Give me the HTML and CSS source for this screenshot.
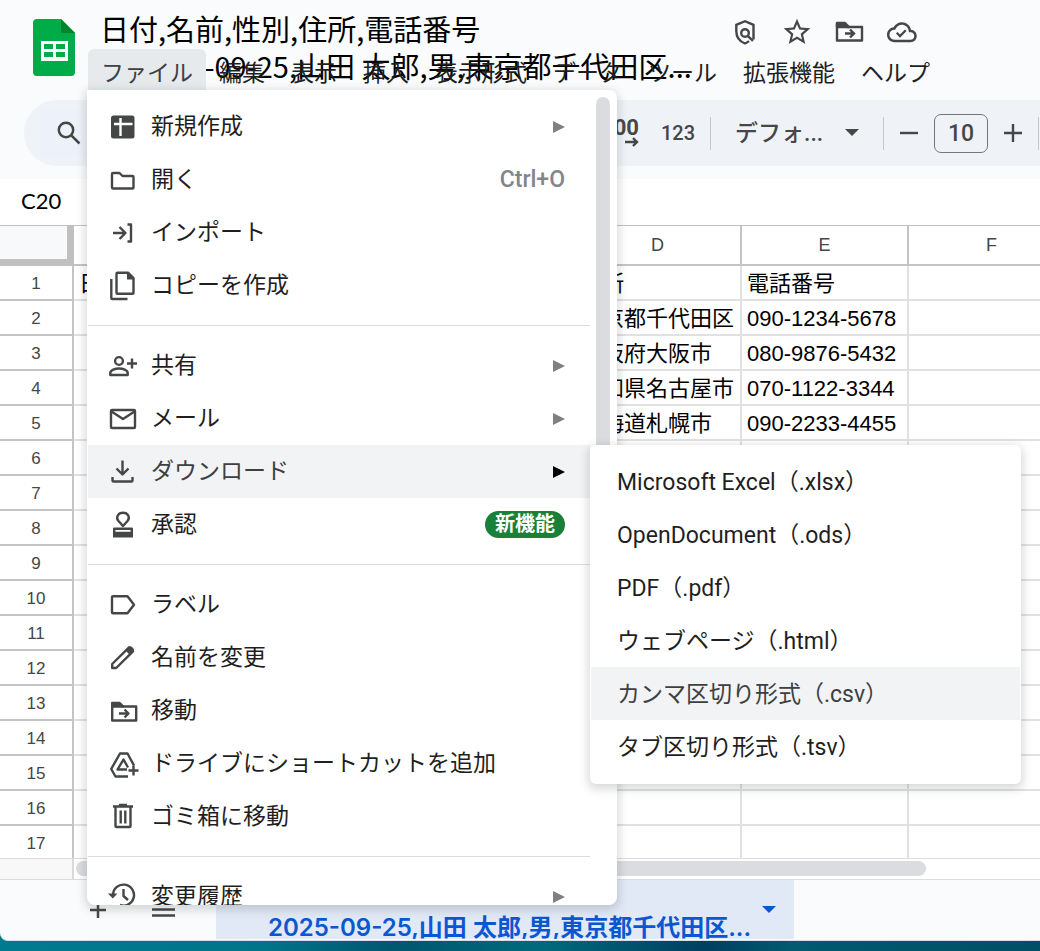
FILE: index.html
```html
<!DOCTYPE html>
<html lang="ja">
<head>
    <meta charset="UTF-8">
    <meta name="viewport" content="width=device-width, initial-scale=1.0">
    <title>日付,名前,性別,住所,電話番号</title>
    <link rel="stylesheet" href="styles.css">
</head>
<body>
    <div class="window">
        <header class="header">
            <svg class="logo" viewBox="0 0 42 57">
                <path fill="#00ac47" d="M4 0h24l14 14v39a4 4 0 0 1-4 4H4a4 4 0 0 1-4-4V4a4 4 0 0 1 4-4z"/>
                <path fill="#00832d" d="M28 0l14 14H28z"/>
                <path fill="#fff" fill-rule="evenodd" d="M8 22h27v20H8zM11 25v5h9v-5zM23 25v5h9v-5zM11 33v5h9v-5zM23 33v5h9v-5z"/>
            </svg>
            <div class="header-main">
                <div class="title-row">
                    <h1 class="title">日付,名前,性別,住所,電話番号<span class="title-next">2025-09-25,山田 太郎,男,東京都千代田区...</span></h1>
                    <div class="title-icons">
                        <button class="icon-button" aria-label="プライバシー">
                            <svg viewBox="0 0 32 32" fill="none" stroke="#444746" stroke-width="2.4">
                                <path d="M24.5 23.5V8.8L16 5.2 7.3 8.8V15c0 6 3.6 10.6 8.7 12.5 1.5-.6 2.8-1.3 4-2.3"/>
                                <circle cx="16" cy="17" r="3.8"/>
                                <path d="M18.6 19.8l5.4 5"/>
                            </svg>
                        </button>
                        <button class="icon-button" aria-label="スター">
                            <svg viewBox="0 0 24 24" fill="#444746"><path d="M22 9.24l-7.19-.62L12 2 9.19 8.63 2 9.24l5.46 4.73L5.82 21 12 17.27 18.18 21l-1.63-7.03L22 9.24zM12 15.4l-3.76 2.27 1-4.28-3.32-2.88 4.38-.38L12 6.1l1.71 4.04 4.38.38-3.32 2.88 1 4.28L12 15.4z"/></svg>
                        </button>
                        <button class="icon-button" aria-label="移動">
                            <svg viewBox="0 0 32 32" fill="none" stroke="#444746" stroke-width="2.4">
                                <path d="M4 8v16.5h25V11H15z" stroke-linejoin="round"/>
                                <path d="M4 7h8l4 4H4z" fill="#444746" stroke-linejoin="round"/>
                                <path d="M12 17.5h8M17 13.5l4 4-4 4"/>
                            </svg>
                        </button>
                        <button class="icon-button" aria-label="保存済み">
                            <svg viewBox="-1 0 24 24" fill="#444746"><path d="M19.35 10.04C18.67 6.59 15.64 4 12 4 9.11 4 6.6 5.64 5.35 8.04 2.34 8.36 0 10.91 0 14c0 3.31 2.69 6 6 6h13c2.76 0 5-2.24 5-5 0-2.64-2.05-4.78-4.65-4.96zM19 18H6c-2.21 0-4-1.79-4-4 0-2.05 1.53-3.76 3.56-3.97l1.07-.11.5-.95C8.08 7.14 9.94 6 12 6c2.62 0 4.88 1.86 5.39 4.43l.3 1.5 1.53.11c1.56.1 2.78 1.41 2.78 2.96 0 1.65-1.35 3-3 3zm-8.5-4.2l-2-2-1.3 1.3 3.3 3.3 5.3-5.3-1.3-1.3z" transform="translate(.5 1) scale(.93)"/></svg>
                        </button>
                    </div>
                </div>
                <nav class="menubar">
                    <button class="menubar-item active">ファイル</button>
                    <button class="menubar-item">編集</button>
                    <button class="menubar-item">表示</button>
                    <button class="menubar-item">挿入</button>
                    <button class="menubar-item">表示形式</button>
                    <button class="menubar-item">データ</button>
                    <button class="menubar-item">ツール</button>
                    <button class="menubar-item">拡張機能</button>
                    <button class="menubar-item">ヘルプ</button>
                </nav>
            </div>
        </header>

        <div class="toolbar">
            <button class="search" aria-label="メニューを検索">
                <svg viewBox="0 0 26 26" fill="none" stroke="#444746" stroke-width="2.5">
                    <circle cx="10" cy="10" r="7.2"/>
                    <path d="M15.3 15.3l8.2 8.2"/>
                </svg>
            </button>
            <div class="tools">
                <button class="decimal" aria-label="小数点以下の桁数を増やす">.00
                    <svg viewBox="0 0 14 10" fill="none" stroke="#444746" stroke-width="2.4"><path d="M0 5h12M8 1l4 4-4 4"/></svg>
                </button>
                <button class="number-format">123</button>
                <span class="divider"></span>
                <label class="font-picker">
                    <select aria-label="フォント"><option>デフォ...</option></select>
                    <svg viewBox="0 0 14 8" fill="#444746"><path d="M0 0h14L7 7z"/></svg>
                </label>
                <span class="divider"></span>
                <button class="step" aria-label="フォントサイズを縮小"><svg viewBox="0 0 18 18" stroke="#444746" stroke-width="2.4"><path d="M0 9h18"/></svg></button>
                <input class="font-size" aria-label="フォントサイズ" value="10">
                <button class="step" aria-label="フォントサイズを拡大"><svg viewBox="0 0 18 18" stroke="#444746" stroke-width="2.4"><path d="M0 9h18M9 0v18"/></svg></button>
                <span class="divider"></span>
            </div>
        </div>

        <div class="formula-bar">
            <input class="name-box" aria-label="名前ボックス" value="C20">
        </div>

        <div class="grid">
            <table class="sheet">
                <thead>
                    <tr><th class="corner"></th><th>A</th><th>B</th><th>C</th><th>D</th><th>E</th><th>F</th></tr>
                </thead>
                <tbody>
                    <tr><th>1</th><td>日付</td><td>名前</td><td>性別</td><td>住所</td><td>電話番号</td><td></td></tr>
                    <tr><th>2</th><td></td><td>山田 太郎</td><td>男</td><td>東京都千代田区</td><td>090-1234-5678</td><td></td></tr>
                    <tr><th>3</th><td></td><td></td><td></td><td>大阪府大阪市</td><td>080-9876-5432</td><td></td></tr>
                    <tr><th>4</th><td></td><td></td><td></td><td>愛知県名古屋市</td><td>070-1122-3344</td><td></td></tr>
                    <tr><th>5</th><td></td><td></td><td></td><td>北海道札幌市</td><td>090-2233-4455</td><td></td></tr>
                    <tr><th>6</th><td></td><td></td><td></td><td></td><td></td><td></td></tr>
                    <tr><th>7</th><td></td><td></td><td></td><td></td><td></td><td></td></tr>
                    <tr><th>8</th><td></td><td></td><td></td><td></td><td></td><td></td></tr>
                    <tr><th>9</th><td></td><td></td><td></td><td></td><td></td><td></td></tr>
                    <tr><th>10</th><td></td><td></td><td></td><td></td><td></td><td></td></tr>
                    <tr><th>11</th><td></td><td></td><td></td><td></td><td></td><td></td></tr>
                    <tr><th>12</th><td></td><td></td><td></td><td></td><td></td><td></td></tr>
                    <tr><th>13</th><td></td><td></td><td></td><td></td><td></td><td></td></tr>
                    <tr><th>14</th><td></td><td></td><td></td><td></td><td></td><td></td></tr>
                    <tr><th>15</th><td></td><td></td><td></td><td></td><td></td><td></td></tr>
                    <tr><th>16</th><td></td><td></td><td></td><td></td><td></td><td></td></tr>
                    <tr><th>17</th><td></td><td></td><td></td><td></td><td></td><td></td></tr>
                </tbody>
            </table>
        </div>

        <div class="hscroll">
            <div class="hscroll-head"></div>
            <div class="hscroll-track"><div class="hscroll-thumb"></div></div>
        </div>

        <footer class="tabs">
            <button class="tab-tool" aria-label="シートを追加"><svg viewBox="0 0 24 24" stroke="#444746" stroke-width="2.5"><path d="M4 12h16M12 4v16"/></svg></button>
            <button class="tab-tool" aria-label="すべてのシート"><svg viewBox="0 0 24 24" stroke="#444746" stroke-width="2.5"><path d="M1 5.500h23M1 11.500h23M1 17.500h23"/></svg></button>
            <button class="tab">
                <span class="tab-name">日付,名前,性別,住所,電話番号<br>2025-09-25,山田 太郎,男,東京都千代田区...</span>
                <svg viewBox="0 0 14 8" fill="#0b57d0"><path d="M0 0h14L7 7z"/></svg>
            </button>
        </footer>
    </div>

    <!-- file menu -->
    <div class="menu">
        <div class="menu-list" role="menu">
            <button class="menu-item" role="menuitem">
                <svg class="menu-icon" viewBox="0 0 31 31"><rect x="3" y="4.5" width="23.5" height="23" rx="2.5" fill="#444746"/><path d="M12.5 7v18M6 13h18.5" stroke="#fff" stroke-width="2.4"/></svg>
                <span class="menu-label">新規作成</span><span class="menu-arrow"></span>
            </button>
            <button class="menu-item" role="menuitem">
                <svg class="menu-icon line" viewBox="0 0 31 31"><path d="M5 9h6.5l3 3H24.5a1 1 0 0 1 1 1v10.5a1 1 0 0 1-1 1H5a1 1 0 0 1-1-1V10a1 1 0 0 1 1-1z"/></svg>
                <span class="menu-label">開く</span><span class="menu-key">Ctrl+O</span>
            </button>
            <button class="menu-item" role="menuitem">
                <svg class="menu-icon line" viewBox="0 0 31 31"><path d="M5 16h12M11.500 10l6 6-6 6M19.500 7.500h3.500v17h-3.500"/></svg>
                <span class="menu-label">インポート</span>
            </button>
            <button class="menu-item" role="menuitem">
                <svg class="menu-icon line" viewBox="0 0 31 31"><path d="M9.500 2.700H20l5.500 5.500v14.500a1 1 0 0 1-1 1h-15a1 1 0 0 1-1-1v-19a1 1 0 0 1 1-1z"/><path d="M19 2v7.500h7.500z" fill="#444746" stroke="none"/><path d="M3.300 9v19a1 1 0 0 0 1 1H19.500"/></svg>
                <span class="menu-label">コピーを作成</span>
            </button>
            <hr class="menu-line">
            <button class="menu-item" role="menuitem">
                <svg class="menu-icon line" viewBox="0 0 31 31"><circle cx="11" cy="11" r="3.9"/><path d="M2.3 25v-2c0-3 5-4.5 8.7-4.5s8.700 1.500 8.700 4.500v2z"/><path d="M24 8.500v10M19 13.500h10"/></svg>
                <span class="menu-label">共有</span><span class="menu-arrow"></span>
            </button>
            <button class="menu-item" role="menuitem">
                <svg class="menu-icon line" viewBox="0 0 31 31"><rect x="3" y="7" width="24" height="18" rx="1"/><path d="M3.500 8.500L15 16l11.500-7.500"/></svg>
                <span class="menu-label">メール</span><span class="menu-arrow"></span>
            </button>
            <button class="menu-item selected" role="menuitem">
                <svg class="menu-icon line" viewBox="0 0 31 31"><path d="M14.500 4.500v13.500M8.500 12.500l6 6 6-6M4.500 21v3.500a1 1 0 0 0 1 1h18a1 1 0 0 0 1-1V21"/></svg>
                <span class="menu-label">ダウンロード</span><span class="menu-arrow"></span>
            </button>
            <button class="menu-item" role="menuitem">
                <svg class="menu-icon line" viewBox="0 0 31 31"><path d="M15 17l-4.500-5c-3-3.500-.5-8.300 4.500-8.300s7.500 4.800 4.500 8.300z"/><path d="M6.200 24v-4.300h17.600V24z"/><path d="M5 23h20v5.500H5z" fill="#444746" stroke="none"/></svg>
                <span class="menu-label">承認</span><span class="badge">新機能</span>
            </button>
            <hr class="menu-line">
            <button class="menu-item" role="menuitem">
                <svg class="menu-icon line" viewBox="0 0 31 31"><path d="M5 7.200h14.500l6.500 8.500-6.500 8.500H5a1 1 0 0 1-1-1v-15a1 1 0 0 1 1-1z"/></svg>
                <span class="menu-label">ラベル</span>
            </button>
            <button class="menu-item" role="menuitem">
                <svg class="menu-icon line" viewBox="0 0 31 31"><path d="M4.200 26v-4L21 5.300l4 4L8.200 26z"/><path d="M17.500 8.500L21 5c1-1 2-1 3 0l1.200 1.200c1 1 1 2 0 3l-3.500 3.500z" fill="#444746" stroke="none"/></svg>
                <span class="menu-label">名前を変更</span>
            </button>
            <button class="menu-item" role="menuitem">
                <svg class="menu-icon line" viewBox="0 0 31 31"><path d="M4.200 9v16.500h24V11.500H16z"/><path d="M4.200 8h7.500l3.500 3.500h-11z" fill="#444746"/><path d="M11 18.500h8.500M16.500 14.500l4 4-4 4"/></svg>
                <span class="menu-label">移動</span>
            </button>
            <button class="menu-item" role="menuitem">
                <svg class="menu-icon line" viewBox="0 0 31 31"><path d="M20 28.500H7.500L3.200 21 12 5.500h7.500l6.500 12"/><path d="M19 21.500H9.500L15.500 11.500l4.500 8"/><path d="M25.500 17.500v10M20.500 22.500h10"/></svg>
                <span class="menu-label">ドライブにショートカットを追加</span>
            </button>
            <button class="menu-item" role="menuitem">
                <svg class="menu-icon line" viewBox="0 0 31 31"><path d="M5 5.500h20M11 4h8M7.500 6v19a1 1 0 0 0 1 1h13a1 1 0 0 0 1-1V6M12.700 9.500v13M17.300 9.500v13"/></svg>
                <span class="menu-label">ゴミ箱に移動</span>
            </button>
            <hr class="menu-line">
            <button class="menu-item" role="menuitem">
                <svg class="menu-icon line" viewBox="0 0 31 31"><path d="M5 14A10.500 10.500 0 1 1 12 24M15.500 8v7l4.500 4"/><path d="M0 12.500h9.500l-4.700 5z" fill="#444746" stroke="none"/></svg>
                <span class="menu-label">変更履歴</span><span class="menu-arrow"></span>
            </button>
        </div>
        <div class="menu-scroll"><div class="menu-thumb"></div></div>
    </div>

    <!-- download submenu -->
    <div class="submenu" role="menu">
        <button class="submenu-item" role="menuitem">Microsoft Excel（.xlsx）</button>
        <button class="submenu-item" role="menuitem">OpenDocument（.ods）</button>
        <button class="submenu-item" role="menuitem">PDF（.pdf）</button>
        <button class="submenu-item" role="menuitem">ウェブページ（.html）</button>
        <button class="submenu-item selected" role="menuitem">カンマ区切り形式（.csv）</button>
        <button class="submenu-item" role="menuitem">タブ区切り形式（.tsv）</button>
    </div>
</body>
</html>
```
FILE: styles.css
```css
* {
    box-sizing: border-box;
}
body {
    margin: 0;
    height: 100vh;
    padding-bottom: 10px;
    overflow: hidden;
    position: relative;
    font-family: Roboto, "Noto Sans CJK JP", sans-serif;
    font-size: 23px;
    color: #1f1f1f;
    background: linear-gradient(90deg, #007a8e 0%, #00758a 25%, #00566f 38%, #006a7c 52%, #003f60 68%, #005a70 76%, #004f66 100%);
}
button, input, select {
    font: inherit;
    color: inherit;
    background: none;
    border: none;
    margin: 0;
    padding: 0;
}
button {
    cursor: pointer;
}
svg {
    display: block;
    flex: none;
}
.window {
    height: 100%;
    display: flex;
    flex-direction: column;
    overflow: hidden;
    background-color: #f9fbfd;
    border-bottom: 1px solid #d5dde0;
    border-bottom-left-radius: 8px;
}

/* header */
.header {
    display: flex;
    height: 100px;
    flex: none;
    padding-left: 33px;
}
.logo {
    width: 42px;
    height: 57px;
    margin-top: 19px;
}
.header-main {
    flex: 1;
    min-width: 0;
    margin-left: 13px;
}
.title-row {
    display: flex;
    height: 49px;
    padding-left: 12px;
}
.title {
    width: 600px;
    margin: 0;
    padding-top: 10px;
    font-family: "Noto Sans CJK JP", sans-serif;
    font-size: 29px;
    line-height: 37px;
    font-weight: 400;
    color: #000;
    white-space: nowrap;
}
.title-next {
    display: block;
    padding-left: 40px;
}
.title-icons {
    display: flex;
    gap: 20px;
    padding: 16px 0 0 29px;
}
.icon-button, .icon-button svg {
    width: 32px;
    height: 32px;
}
.menubar {
    position: relative;
    display: flex;
    height: 41px;
    white-space: nowrap;
}
.menubar-item {
    padding: 4px 13px 0;
    height: 41px;
    line-height: 41px;
}
.menubar-item.active {
    background-color: #e6eaed;
    border-radius: 6px 6px 0 0;
    color: #3c4043;
}

/* toolbar */
.toolbar {
    display: flex;
    align-items: center;
    justify-content: space-between;
    flex: none;
    height: 66px;
    margin: 0 0 13px 24px;
    padding: 0 1px 0 16px;
    background-color: #eff3f8;
    border-radius: 33px 0 0 33px;
    color: #444746;
}
.search {
    width: 200px;
    height: 47px;
    padding-left: 16px;
    border-radius: 6px;
    background-color: #edf2fa;
}
.search svg {
    width: 26px;
    height: 26px;
}
.tools {
    display: flex;
    align-items: center;
}
.decimal {
    font-size: 22px;
    line-height: 18px;
    font-weight: 700;
    text-align: right;
    margin-right: 22px;
}
.decimal svg {
    width: 14px;
    height: 10px;
    margin-left: auto;
}
.number-format {
    font-size: 20px;
    font-weight: 500;
    line-height: 24px;
    margin-right: 15px;
}
.divider {
    width: 1px;
    height: 33px;
    background-color: #c7c7c7;
}
.font-picker {
    display: flex;
    align-items: center;
    width: 172px;
    padding: 0 24px;
}
.font-picker select {
    appearance: none;
    flex: 1;
    min-width: 0;
    font-weight: 500;
}
.font-picker svg {
    width: 14px;
    height: 8px;
}
.step {
    width: 18px;
    height: 18px;
    margin: 0 16px;
}
.step svg {
    width: 18px;
    height: 18px;
}
.font-size {
    width: 54px;
    height: 39px;
    border: 1px solid #747775;
    border-radius: 7px;
    text-align: center;
    font-weight: 500;
}

.formula-bar {
    flex: none;
    height: 46px;
    padding-left: 21px;
    background-color: #fff;
}
.name-box {
    width: 60px;
    height: 42px;
    font-family: Lato, sans-serif;
    font-size: 22px;
    color: #000;
}

/* cells */
.grid {
    flex: 1;
    min-height: 0;
    overflow: hidden;
    background-color: #fff;
    border-top: 1px solid #c0c0c0;
    border-bottom: 1px solid #dcdcdc;
}
.sheet {
    width: 1076px;
    table-layout: fixed;
    border-collapse: separate;
    border-spacing: 0;
    font-family: "Liberation Sans", "Noto Sans CJK JP", sans-serif;
    font-size: 22px;
    color: #000;
}
.sheet th, .sheet td {
    height: 35px;
    padding: 0;
    border-right: 2px solid #e1e1e1;
    border-bottom: 2px solid #e1e1e1;
    line-height: 33px;
    white-space: nowrap;
    overflow: hidden;
}
.sheet td {
    padding: 3px 0 0 5px;
    line-height: 30px;
}
.sheet th {
    font-size: 17px;
    font-weight: 400;
    color: #444746;
    border-color: #c4c4c4;
}
.sheet tbody th {
    padding-top: 2px;
    line-height: 31px;
}
.sheet thead th {
    height: 40px;
    font-size: 18px;
}
.sheet .corner {
    width: 74px;
    background-color: #f8f9fa;
    border-right: 7px solid #c0c0c0;
    border-bottom: 7px solid #c0c0c0;
}
.hscroll {
    display: flex;
    flex: none;
    height: 21px;
    background-color: #fff;
    border-bottom: 1px solid #dcdcdc;
}
.hscroll-head {
    width: 74px;
    background-color: #f8f8f8;
    border-right: 2px solid #dadada;
}
.hscroll-track {
    flex: 1;
    padding: 2px 114px 0 2px;
}
.hscroll-thumb {
    height: 15px;
    border-radius: 8px;
    background-color: #dadce0;
}

/* sheet tabs */
.tabs {
    display: flex;
    flex: none;
    height: 60px;
    padding-left: 86px;
}
.tab-tool {
    width: 24px;
    height: 60px;
    margin-right: 41px;
}
.tab-tool svg {
    width: 24px;
    height: 24px;
}
.tab {
    display: flex;
    align-items: center;
    height: 59px;
    width: 578px;
    padding: 0 18px 0 52px;
    background-color: #e1e9f7;
    color: #0b57d0;
    overflow: hidden;
}
.tab-name {
    flex: 1;
    font-family: Inter, "Noto Sans CJK JP", sans-serif;
    font-size: 24px;
    font-weight: 600;
    line-height: 36px;
    text-align: left;
    white-space: nowrap;
}
.tab svg {
    width: 14px;
    height: 8px;
}

/* menus */
.menu {
    position: absolute;
    left: 87px;
    top: 90px;
    bottom: 46px;
    width: 530px;
    display: flex;
    overflow: hidden;
    background-color: #fff;
    border-radius: 0 8px 8px 8px;
    box-shadow: 0 3px 10px 2px rgba(60, 64, 67, 0.2);
}
.menu-list {
    flex: 1;
    padding: 10px 0 0 1px;
}
.menu-item {
    display: flex;
    align-items: center;
    width: 100%;
    height: 53px;
    padding: 0 25px 0 20px;
    text-align: left;
}
.menu-icon {
    width: 31px;
    height: 31px;
    margin-right: 12px;
}
.menu-icon.line {
    fill: none;
    stroke: #444746;
    stroke-width: 2.4;
    stroke-linejoin: round;
}
.menu-label {
    flex: 1;
    padding-bottom: 5px;
    white-space: nowrap;
}
.menu-arrow {
    border: 6px solid transparent;
    border-left: 12px solid #808080;
    border-right: none;
}
.menu-key {
    font-weight: 500;
    color: #80868b;
}
.selected {
    background-color: #f1f3f4;
    color: #3c4043;
}
.selected .menu-arrow {
    border-left-color: #000;
}
.menu-line {
    height: 1px;
    margin: 13px 0;
    border: none;
    background-color: #dadce0;
}
.badge {
    padding: 0 10px;
    border-radius: 14px;
    background-color: #188038;
    color: #fff;
    font-size: 20px;
    font-weight: 700;
    line-height: 27px;
}
.menu-scroll {
    width: 27px;
    padding: 7px 7px 0 6px;
}
.menu-thumb {
    height: 74%;
    border-radius: 7px;
    background-color: #dadce0;
}
.submenu {
    position: absolute;
    left: 590px;
    top: 445px;
    width: 431px;
    padding: 10px 1px 11px;
    background-color: #fff;
    border-radius: 6px;
    box-shadow: 0 3px 10px 2px rgba(60, 64, 67, 0.2);
}
.submenu-item {
    display: block;
    width: 100%;
    height: 53px;
    padding: 0 0 4px 26px;
    text-align: left;
}
```
